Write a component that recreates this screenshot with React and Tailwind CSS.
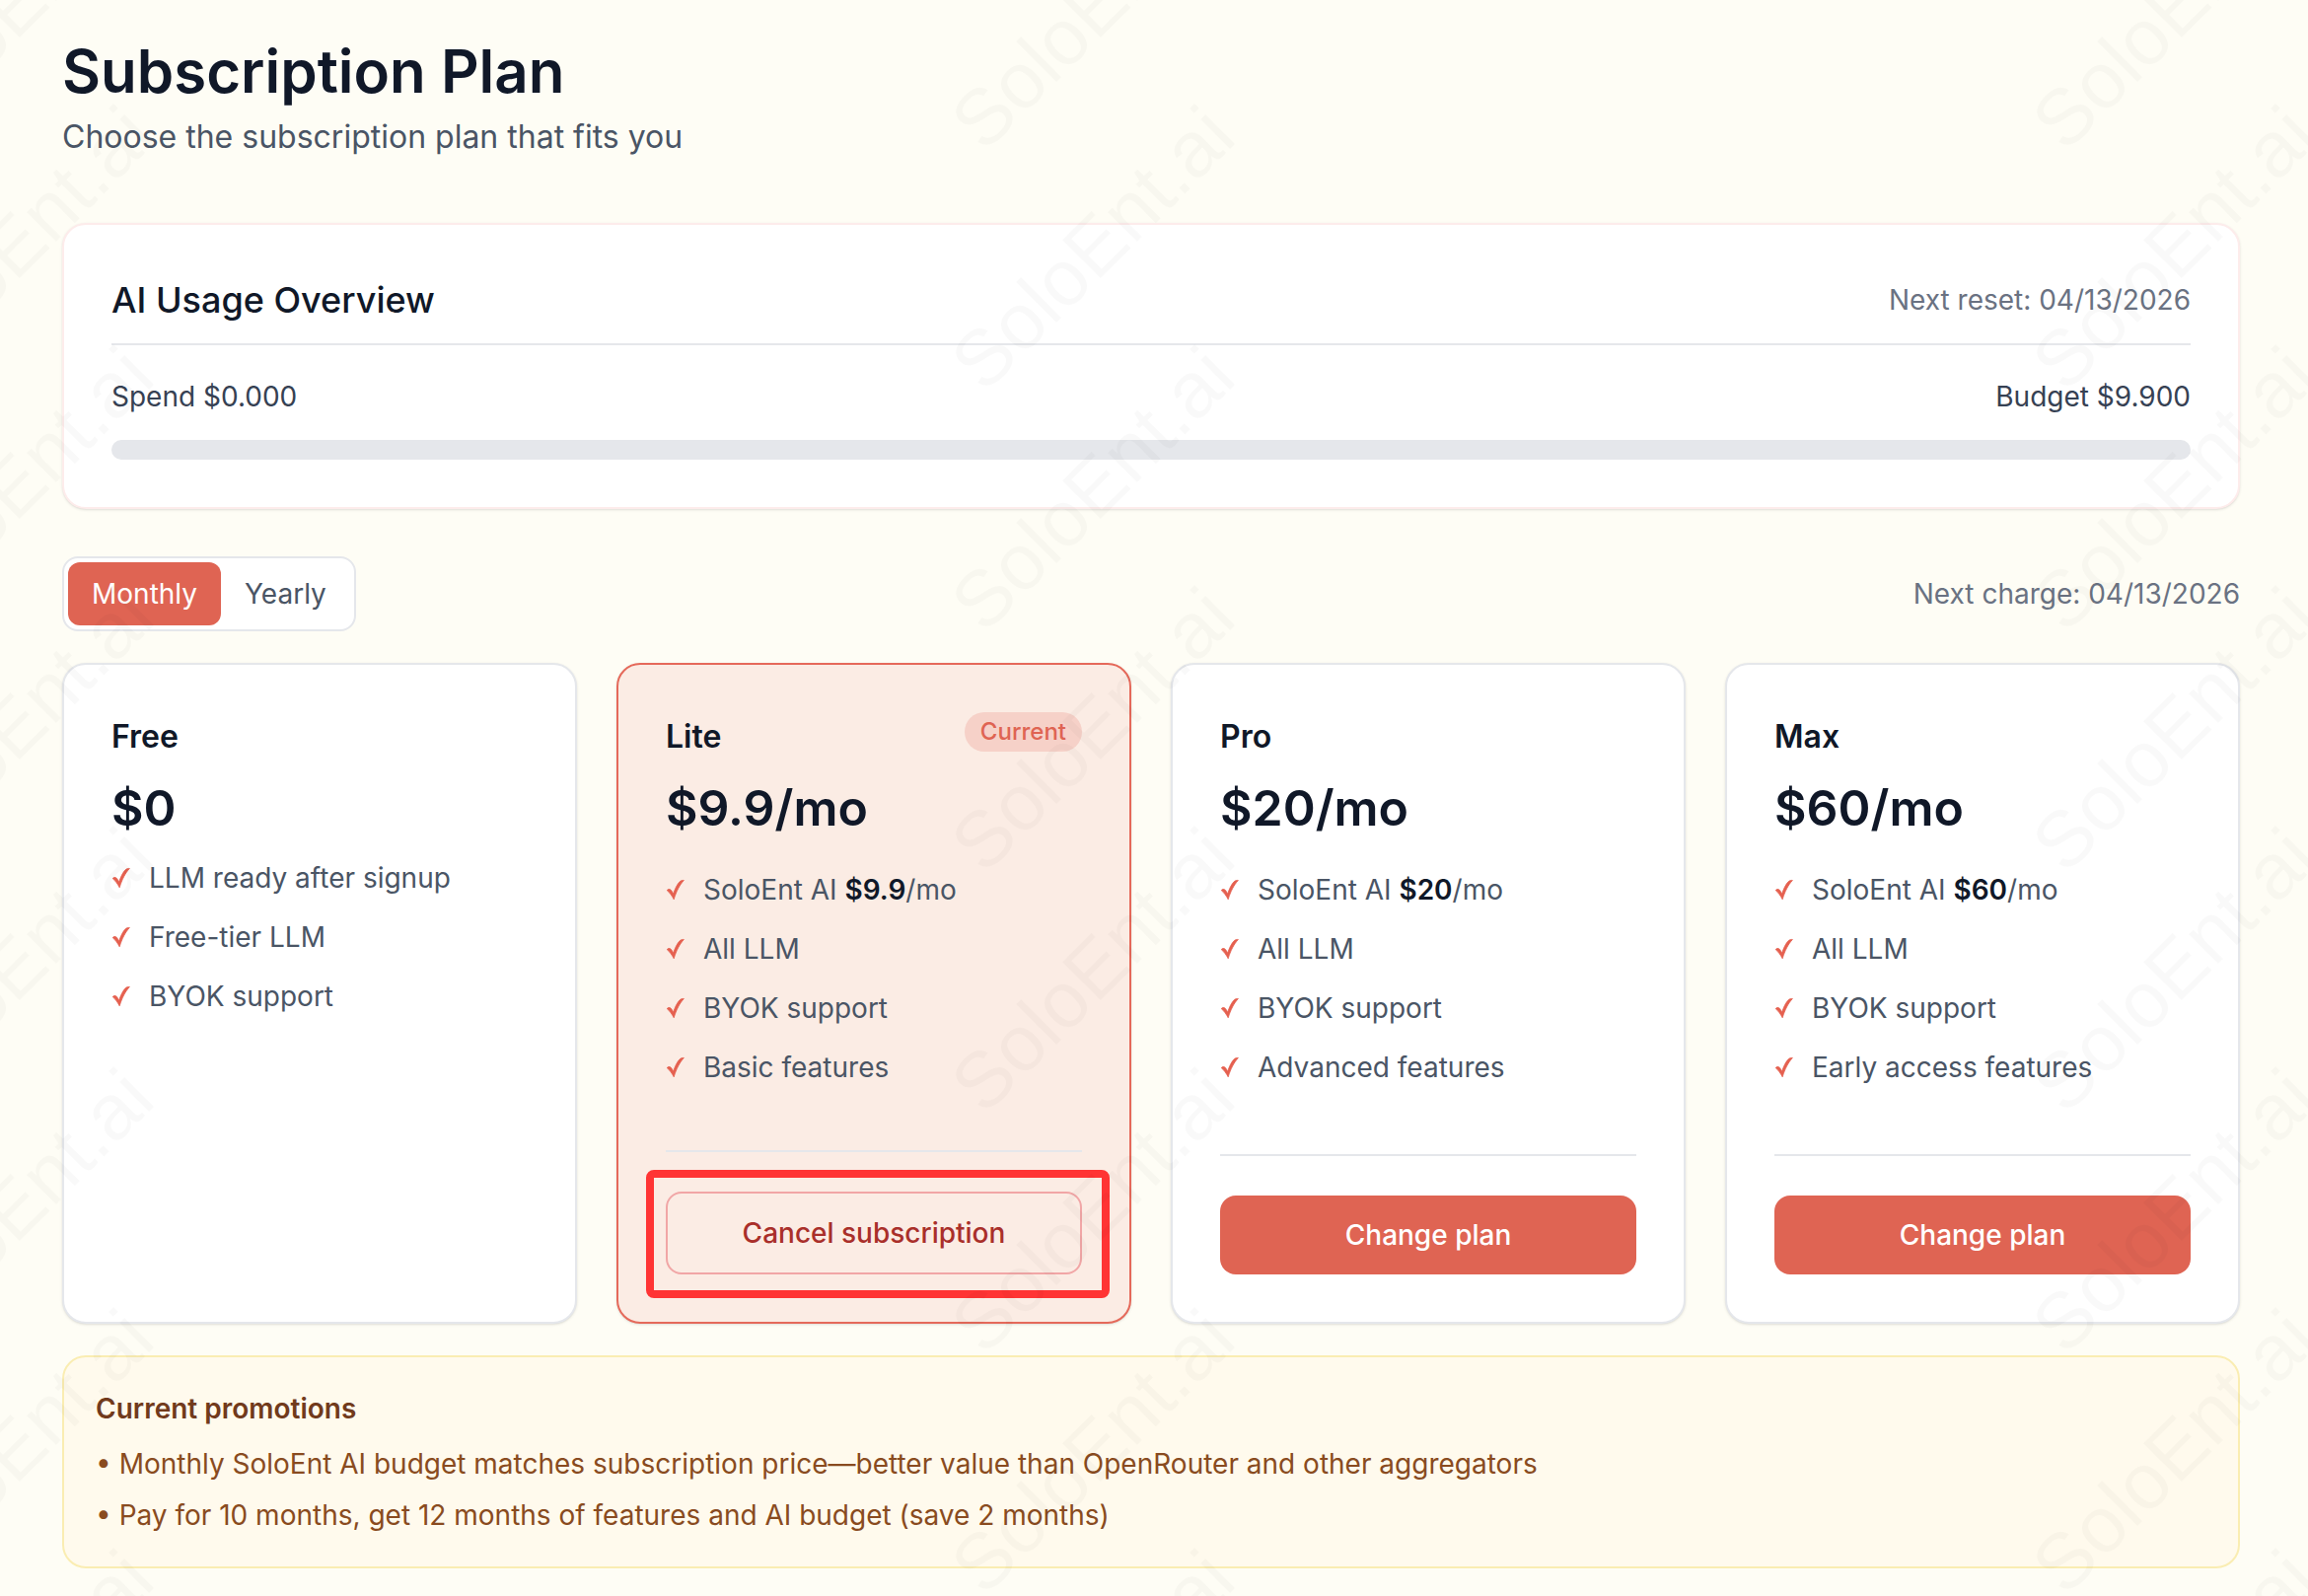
const WATERMARK_COLUMNS = [-98, 998, 2094];
const WATERMARK_ROWS = [156, 400, 644, 888, 1132, 1376, 1620, 1864];

const PLANS = [
  { name: 'Free', price: '$0', features: ['LLM ready after signup', 'Free-tier LLM', 'BYOK support'] },
  { name: 'Lite', price: '$9.9/mo', credit: '$9.9', current: true, features: ['All LLM', 'BYOK support', 'Basic features'] },
  { name: 'Pro', price: '$20/mo', credit: '$20', features: ['All LLM', 'BYOK support', 'Advanced features'] },
  { name: 'Max', price: '$60/mo', credit: '$60', features: ['All LLM', 'BYOK support', 'Early access features'] },
];

function Watermark() {
  return (
    <svg className="pointer-events-none absolute inset-0 h-full w-full" aria-hidden="true">
      {WATERMARK_COLUMNS.map((x) =>
        WATERMARK_ROWS.map((y) => (
          <text
            key={`${x}-${y}`}
            transform={`translate(${x} ${y}) rotate(-45)`}
            className="fill-black/[0.025] font-['Liberation_Sans',sans-serif] text-[80px]"
          >
            SoloEnt.ai
          </text>
        ))
      )}
    </svg>
  );
}

function Check() {
  return (
    <svg className="h-6 w-[22px] shrink-0" viewBox="0 0 22 24" fill="#e5604f" stroke="#e5604f" strokeWidth="0.8" strokeLinejoin="round" aria-hidden="true">
      <path d="M1.2 12.6C2.2 11.3 3.8 11 5 12.1C6 13.1 6.9 14.6 7.6 16.2C9.3 11.2 11.6 6.2 14.4 3.6C15.6 2.5 17 2.3 18.4 2.5C14.2 6.8 10.6 13.8 8.2 21.8C6.4 18.4 4.2 15 1.2 12.6Z" />
    </svg>
  );
}

function Feature({ children }) {
  return (
    <li className="flex items-center gap-4">
      <Check />
      <span>{children}</span>
    </li>
  );
}

function PlanCard({ plan }) {
  return (
    <article
      className={
        plan.current
          ? 'flex flex-col rounded-3xl border-2 border-[#e5695a] bg-[#fbece4] p-12 shadow-sm'
          : 'flex flex-col rounded-3xl border-2 border-gray-200 bg-white p-12 shadow-sm'
      }
    >
      <div className="flex items-start justify-between">
        <h3 className="text-[32px] leading-[50px] font-semibold">{plan.name}</h3>
        {plan.current && (
          <span className="rounded-full bg-[#f6d1c8] px-4 text-2xl leading-10 font-medium text-[#df6453]">Current</span>
        )}
      </div>
      <p className="mt-4 text-[50px] leading-[62px] font-semibold">{plan.price}</p>
      <ul
        className={
          plan.credit
            ? 'mt-8 mb-16 flex flex-col gap-5 text-[28px] leading-10 text-gray-600'
            : 'mt-5 flex flex-col gap-5 text-[28px] leading-10 text-gray-600'
        }
      >
        {plan.credit && (
          <Feature>
            SoloEnt AI <strong className="font-semibold text-gray-900">{plan.credit}</strong>/mo
          </Feature>
        )}
        {plan.features.map((feature) => (
          <Feature key={feature}>{feature}</Feature>
        ))}
      </ul>
      {plan.credit && (
        <div className="mt-auto border-t-2 border-gray-200 pt-10">
          {plan.current ? (
            <div className="relative">
              <button type="button" className="w-full rounded-2xl border-2 border-[#f1a6a6] py-5 text-[28px] leading-10 font-medium text-[#a92f2a]">
                Cancel subscription
              </button>
              <div className="pointer-events-none absolute -top-[22px] -right-7 -bottom-6 -left-5 rounded-lg border-8 border-[#ff3434]" />
            </div>
          ) : (
            <button type="button" className="w-full rounded-2xl bg-[#df6453] py-5 text-[28px] leading-10 font-medium text-white">
              Change plan
            </button>
          )}
        </div>
      )}
    </article>
  );
}

export default function App() {
  return (
    <div className="relative min-h-screen overflow-hidden bg-[#fefdf5] font-['Inter',sans-serif] text-gray-900">
      <main className="pt-9 pr-[69px] pb-7 pl-[63px]">
        <h1 className="text-6xl leading-[72px] font-semibold">Subscription Plan</h1>
        <p className="mt-2 text-[32px] leading-[46px] text-gray-600">Choose the subscription plan that fits you</p>

        <section className="mt-16 rounded-3xl border-2 border-[#fdeceb] bg-white p-12 shadow-sm">
          <div className="flex items-center justify-between border-b-2 border-gray-200 pb-4">
            <h2 className="text-4xl leading-14 font-medium">AI Usage Overview</h2>
            <span className="text-[28px] leading-10 text-gray-500">Next reset: 04/13/2026</span>
          </div>
          <div className="mt-8 flex justify-between text-[28px] leading-10 text-gray-700">
            <span>Spend $0.000</span>
            <span>Budget $9.900</span>
          </div>
          <div className="mt-6 h-5 rounded-full bg-gray-200" role="progressbar" aria-label="AI budget used" aria-valuenow={0} aria-valuemin={0} aria-valuemax={9.9} />
        </section>

        <div className="mt-12 flex items-center justify-between">
          <div className="flex rounded-2xl border-2 border-gray-200 bg-white p-1 text-[28px] leading-10">
            <button type="button" aria-pressed="true" className="rounded-xl bg-[#df6453] px-6 py-3 text-white">Monthly</button>
            <button type="button" aria-pressed="false" className="rounded-xl px-6 py-3 text-gray-600">Yearly</button>
          </div>
          <span className="text-[28px] leading-10 text-gray-500">Next charge: 04/13/2026</span>
        </div>

        <div className="mt-8 grid grid-cols-4 gap-10">
          {PLANS.map((plan) => (
            <PlanCard key={plan.name} plan={plan} />
          ))}
        </div>

        <section className="mt-8 rounded-3xl border-2 border-[#faedb2] bg-[#fffaed] p-8">
          <h2 className="text-[28px] leading-10 font-semibold text-[#713a1c]">Current promotions</h2>
          <ul className="mt-4 flex flex-col gap-3 text-[28px] leading-10 text-[#894b20]">
            <li>• Monthly SoloEnt AI budget matches subscription price—better value than OpenRouter and other aggregators</li>
            <li>• Pay for 10 months, get 12 months of features and AI budget (save 2 months)</li>
          </ul>
        </section>
      </main>
      <Watermark />
    </div>
  );
}
